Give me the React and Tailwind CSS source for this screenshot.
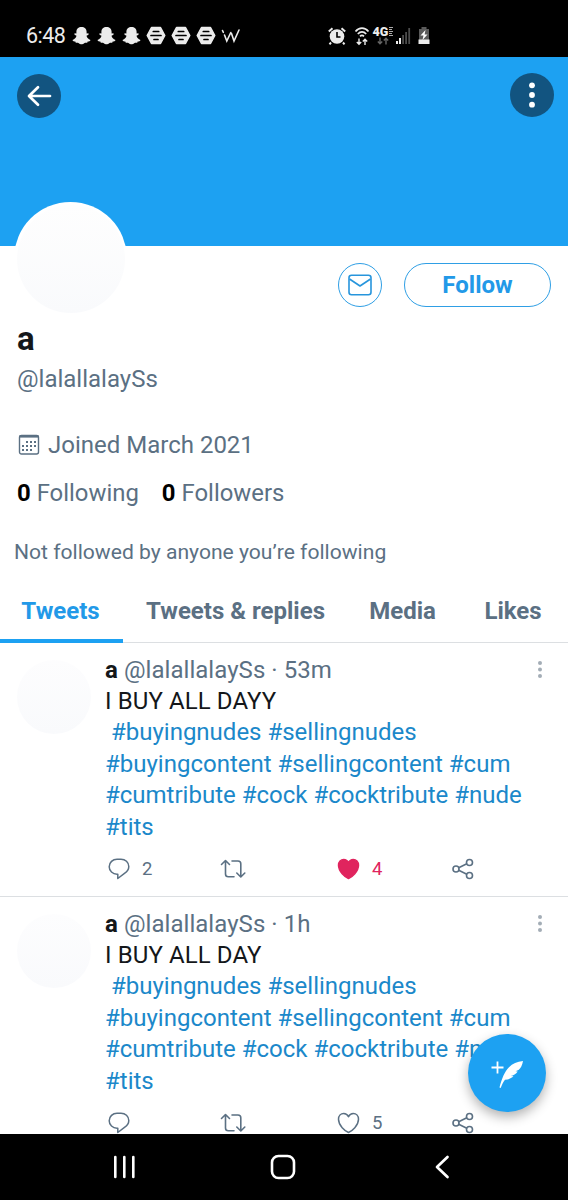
const TABS = [
  { label: 'Tweets', box: 'w-[123px] pr-[2px]', active: true },
  { label: 'Tweets & replies', box: 'w-[225px]' },
  { label: 'Media', box: 'w-[110px] pr-px' },
  { label: 'Likes', box: 'w-[110px]' },
]

const HASHTAG_LINES = [
  '\u00a0#buyingnudes #sellingnudes',
  '#buyingcontent #sellingcontent #cum',
  '#cumtribute #cock #cocktribute #nude',
  '#tits',
]

const TWEETS = [
  { id: 1, time: '53m', text: 'I BUY ALL DAYY', replies: 2, likes: 4, liked: true },
  { id: 2, time: '1h', text: 'I BUY ALL DAY', replies: null, likes: 5, liked: false },
]

function Ghost() {
  return (
    <svg width="19" height="19" viewBox="0 0 19 19" fill="#ececec">
      <path d="M9.500 1C6.500 1 4.400 3 4.400 5.800v1.700L2.500 7.300v1.500l2 .9c-.5 2-1.800 3.400-4 4.300.3 1.100 1.500 1.400 2.800 1.600l.5 1.200c1.200 0 2.100-.2 3 .4.800.6 1.600 1.100 2.700 1.100s1.900-.5 2.700-1.100c.9-.6 1.800-.4 3-.4l.5-1.200c1.300-.2 2.500-.5 2.800-1.600-2.200-.9-3.500-2.300-4-4.300l2-.9V7.300l-1.900.2V5.800C14.600 3 12.500 1 9.500 1z" />
    </svg>
  )
}

function Hive() {
  return (
    <svg width="20" height="19" viewBox="0 0 20 19">
      <path d="M5.500 1.500h9l4.300 8-4.300 8h-9l-4.300-8z" fill="#ececec" stroke="#ececec" strokeWidth="1.500" strokeLinejoin="round" />
      <path d="M7.300 5.500h5.400M5 9.500h10M8 13.500h4" stroke="#000" strokeWidth="1.700" strokeLinecap="round" />
    </svg>
  )
}

function StatusBar() {
  return (
    <header className="flex h-[57px] shrink-0 items-center bg-black pt-[14px] pl-[26px] text-[#ececec]">
      <span className="w-[46px] text-[21.500px] leading-none tracking-[-0.5px]">6:48</span>
      <div className="flex w-[74px] gap-[6px]">
        <Ghost />
        <Ghost />
        <Ghost />
      </div>
      <div className="flex w-[75px] gap-[5px]">
        <Hive />
        <Hive />
        <Hive />
      </div>
      <svg className="shrink-0" width="20" height="18" viewBox="0 0 20 18" fill="none" stroke="#ececec" strokeWidth="1.600" strokeLinecap="round">
        <path d="M1.500 3.500l.8 1.800M3.500 8l2.300 6L9.800 5.500M10.500 6.500l2.500 7.500L18 3" />
      </svg>

      <svg className="ml-[86px] shrink-0" width="20" height="20" viewBox="0 0 20 20" fill="none">
        <circle cx="10" cy="10.500" r="7.300" fill="#ececec" />
        <path d="M4 16.500l-1.500 1.800M16 16.500l1.500 1.800M1.800 5.500l3.700-3.200M18.200 5.500l-3.700-3.200" stroke="#ececec" strokeWidth="2" />
        <path d="M10 6v5h3.500" stroke="#000" strokeWidth="1.600" />
      </svg>
      <svg className="ml-[7px] shrink-0" width="16" height="20" viewBox="0 0 16 20" fill="none" stroke="#ececec">
        <path d="M1.500 5.500c3.700-4.500 9.300-4.500 13 0M3.800 8c2.600-2.800 5.800-2.800 8.400 0M6 10.300c1.300-1.300 2.700-1.300 4 0" strokeWidth="1.700" />
        <path d="M5 12.500v5.500M2.800 16L5 18.300 7.200 16M11 19v-5.500M8.800 15.500L11 13.200l2.200 2.300" strokeWidth="1.400" />
      </svg>
      <div className="ml-[2px] flex w-[22px] flex-col items-center">
        <span className="flex items-start gap-px text-[12.500px] leading-[11px] font-black">
          4G
          <svg className="mt-px" width="4" height="9" viewBox="0 0 4 9" stroke="#aaa" strokeWidth="1">
            <path d="M0 .5h4M0 2.500h3M0 4.500h4M0 6.500h3M0 8.500h4" />
          </svg>
        </span>
        <svg width="14" height="8" viewBox="0 0 14 8" fill="none" stroke="#666" strokeWidth="1.400">
          <path d="M4 .5v6M1.800 4.500L4 6.800l2.200-2.300M10 7.500v-6M7.800 3.500L10 1.200l2.200 2.300" />
        </svg>
      </div>
      <svg className="ml-px shrink-0" width="16" height="18" viewBox="0 0 16 18">
        <path d="M1 14h2v3H1zM4 11h2v6H4z" fill="#ececec" />
        <path d="M7.200 8H9v9H7.200zM10.200 5H12v12h-1.800zM13.300 1h1.800v16h-1.800z" fill="#4c4c4c" />
      </svg>
      <svg className="ml-[6px] shrink-0" width="14" height="19" viewBox="0 0 14 19">
        <path d="M4.500 1h5v2H12v11H2V3h2.500z" fill="#5a5a5a" />
        <path d="M1.500 13.500h11V18h-11z" fill="#ececec" />
        <path d="M8.500 4L3.500 9.500h3L5.500 14l5-5.500H7.600z" fill="#fff" />
      </svg>
    </header>
  )
}

function Banner() {
  return (
    <div className="flex h-[189px] shrink-0 items-start justify-between bg-[#1da1f2] pt-[16px] pr-[14px] pl-[17px]">
      <button className="mt-px flex size-11 items-center justify-center rounded-full bg-[#125480]" aria-label="Back">
        <svg width="26" height="24" viewBox="0 0 26 24" fill="none" stroke="#fff" strokeWidth="2.700" strokeLinecap="round" strokeLinejoin="round">
          <path d="M12 3.200L3 12l9 8.800M3.500 12H24" />
        </svg>
      </button>
      <button className="flex size-11 items-center justify-center rounded-full bg-[#125480]" aria-label="More">
        <svg width="6" height="26" viewBox="0 0 6 26" fill="#fff">
          <circle cx="3" cy="3.300" r="2.900" />
          <circle cx="3" cy="13" r="2.900" />
          <circle cx="3" cy="22.700" r="2.900" />
        </svg>
      </button>
    </div>
  )
}

function Profile() {
  return (
    <section className="flex h-[334px] shrink-0 flex-col text-[#5b7083]">
      <div className="flex h-[74px] items-start pr-[17px] pl-[14px]">
        <div className="-mt-[44px] size-[113px] shrink-0 rounded-full bg-white p-[2.500px]">
          <div className="size-[108px] rounded-full bg-linear-to-b from-[#fefefe] to-[#f9fafc]" />
        </div>
        <button className="mt-[17px] ml-auto flex size-[44px] items-center justify-center rounded-full border-[1.500px] border-[#2f9fe5]" aria-label="Message">
          <svg width="24" height="22" viewBox="0 0 24 22" fill="none" stroke="#2795dc" strokeWidth="1.600" strokeLinejoin="round">
            <rect x="1" y="1.200" width="22" height="19.600" rx="2.500" />
            <path d="M1.500 5L12 12l10.500-7" />
          </svg>
        </button>
        <button className="mt-[17px] ml-[22px] h-[44px] w-[147px] rounded-full border-[1.500px] border-[#2f9fe5] text-[24px] leading-none font-bold text-[#2299e8]">
          Follow
        </button>
      </div>
      <h1 className="pl-[17px] text-[33px] leading-[38px] font-bold text-[#14171a]">a</h1>
      <p className="mt-[6px] pl-[17px] text-[24px] leading-[30px]">@lalallalaySs</p>
      <p className="mt-[36px] flex items-center pl-[18px] text-[24px] leading-[30px]">
        <svg className="mr-[8px]" width="22" height="22" viewBox="0 0 22 22" fill="none">
          <rect x="1.500" y="1.500" width="19" height="18.500" rx="2" stroke="#5b7083" strokeWidth="1.400" />
          <path d="M1.500 2.300h19" stroke="#5b7083" strokeWidth="2.600" />
          <path d="M8 8h10M4 12h14M4 16h10" stroke="#5b7083" strokeWidth="2" strokeDasharray="2 2" />
        </svg>
        Joined March 2021
      </p>
      <p className="mt-[18px] flex gap-[23px] pl-[17px] text-[23.900px] leading-[30px]">
        <span><b className="text-black">0</b> Following</span>
        <span><b className="text-black">0</b> Followers</span>
      </p>
      <p className="mt-[29px] pl-[14px] text-[21.100px] leading-[30px]">Not followed by anyone you’re following</p>
    </section>
  )
}

function Tabs() {
  return (
    <nav className="flex h-[63px] shrink-0 border-b border-[#dcdfe2] text-[24px] font-bold">
      {TABS.map(({ label, box, active }) => (
        <button
          key={label}
          className={`${box} -mb-px shrink-0 border-b-4 pt-[2px] whitespace-nowrap ${active ? 'border-[#1da1f2] text-[#2299e8]' : 'border-transparent text-[#5b7083]'}`}
        >
          {label}
        </button>
      ))}
    </nav>
  )
}

function HeartIcon({ liked }) {
  return (
    <svg width="23" height="22" viewBox="0 0 23 22" fill={liked ? '#e0245e' : 'none'} stroke={liked ? '#e0245e' : '#5b7083'} strokeWidth="1.500" strokeLinejoin="round">
      <path d="M11.500 20.500C8 19 1.500 13.500 1.500 7.300 1.500 3.800 3.900 1.500 6.700 1.500c2.200 0 3.900 1.300 4.800 3.200.9-1.900 2.600-3.200 4.800-3.200 2.800 0 5.200 2.300 5.200 5.800 0 6.200-6.500 11.700-10 13.200z" />
    </svg>
  )
}

function Tweet({ time, text, replies, likes, liked }) {
  return (
    <article className="flex h-[254px] shrink-0 border-b border-[#dcdfe2] pt-[12px] pl-[17px]">
      <div className="mt-[5px] size-[74px] shrink-0 rounded-full bg-linear-to-b from-[#fdfdfe] to-[#f9fafc]" />
      <div className="ml-[14px] flex-1 text-[24px] leading-[31.500px]">
        <div className="flex h-[30.500px] justify-between pr-[25px] text-[#5b7083]">
          <p className="tracking-[0.050px]"><b className="text-[#14171a]">a</b> @lalallalaySs · {time}</p>
          <svg className="mt-[5px]" width="6" height="19" viewBox="0 0 6 19" fill="#a3adb6">
            <circle cx="3" cy="3" r="2" />
            <circle cx="3" cy="9.500" r="2" />
            <circle cx="3" cy="16" r="2" />
          </svg>
        </div>
        <p className="tracking-[0.1px] text-[#14171a]">{text}</p>
        {HASHTAG_LINES.map((line) => (
          <p key={line} className="whitespace-nowrap text-[#1b88ca]">{line}</p>
        ))}
        <div className="mt-[15px] flex h-[22px] items-center text-[18.500px] leading-none text-[#5b7083]">
          <div className="flex w-[114px] items-center gap-[12px] pl-[3px]">
            <svg width="22" height="22" viewBox="0 0 22 22" fill="none" stroke="#5b7083" strokeWidth="1.500" strokeLinejoin="round">
              <path d="M9 1.200h4c4.300 0 7.800 3.200 7.800 7.400 0 3-1.600 5-4 6.600l-7 5.300v-4.300H9c-4.300 0-7.800-3.300-7.800-7.500S4.700 1.200 9 1.200z" />
            </svg>
            <span>{replies}</span>
          </div>
          <svg width="28" height="22" viewBox="0 0 28 22" fill="none" stroke="#5b7083" strokeWidth="1.600" strokeLinecap="round" strokeLinejoin="round">
            <path d="M2.500 6.500l4-4 4 4M6.500 3v13c0 1.800 1 2.800 2.800 2.800H15M13 3h6c1.800 0 2.800 1 2.800 2.800V18.500M17.800 15l4 4 4-4" />
          </svg>
          <div className="ml-[90px] flex w-[115px] items-center gap-[12px]">
            <HeartIcon liked={liked} />
            <span className={liked ? 'text-[#e0245e]' : ''}>{likes}</span>
          </div>
          <svg width="22" height="22" viewBox="0 0 22 22" fill="none" stroke="#5b7083" strokeWidth="1.600">
            <circle cx="4" cy="11" r="3" />
            <circle cx="17.500" cy="4.500" r="3" />
            <circle cx="17.500" cy="17.500" r="3" />
            <path d="M6.700 9.700l8.100-3.900M6.700 12.300l8.100 3.900" />
          </svg>
        </div>
      </div>
    </article>
  )
}

function NavBar() {
  return (
    <footer className="flex h-[66px] shrink-0 items-center bg-black pl-[112px]">
      <svg width="24" height="24" viewBox="0 0 24 24" stroke="#fff" strokeWidth="2.600" strokeLinecap="round">
        <path d="M3.300 2v20M12.300 2v20M21.300 2v20" />
      </svg>
      <svg className="ml-[134px]" width="26" height="26" viewBox="0 0 26 26" fill="none" stroke="#fff" strokeWidth="2.600">
        <rect x="2" y="2" width="22" height="22" rx="6.500" />
      </svg>
      <svg className="ml-[138px]" width="16" height="24" viewBox="0 0 16 24" fill="none" stroke="#fff" strokeWidth="2.700" strokeLinecap="round" strokeLinejoin="round">
        <path d="M13.500 2L3 12l10.500 10" />
      </svg>
    </footer>
  )
}

export default function App() {
  return (
    <div className="relative flex h-[1200px] w-[568px] flex-col overflow-hidden bg-white font-['Roboto',sans-serif]">
      <StatusBar />
      <Banner />
      <Profile />
      <Tabs />
      <main className="flex min-h-0 flex-1 flex-col overflow-hidden">
        {TWEETS.map((tweet) => (
          <Tweet key={tweet.id} {...tweet} />
        ))}
      </main>
      <NavBar />

      {/* Floating compose button */}
      <button className="absolute top-[1034px] left-[468px] flex size-[78px] items-center justify-center rounded-full bg-[#1da1f2] shadow-[0_5px_12px_rgba(0,0,0,0.3)]" aria-label="Compose">
        <svg width="34" height="32" viewBox="0 0 34 32" fill="none">
          <path d="M7.500 4.500v12M1.500 10.500h12" stroke="#fff" strokeWidth="1.800" />
          <path d="M33 4C27 4.500 22.500 6.500 19 10.300 14.500 15 12 21 9.500 30.600l1.200.4c1.200-3.300 2.500-6 4.300-8.300 3.200-.1 6.300-1.200 8.500-3.400l-2.800-.3c2.700-.4 5.300-1.900 7-4.500l-2.200-.3c2.500-.6 4.500-2 5.700-4.400C32 8 32.700 6 33 4z" fill="#fff" />
        </svg>
      </button>
    </div>
  )
}
